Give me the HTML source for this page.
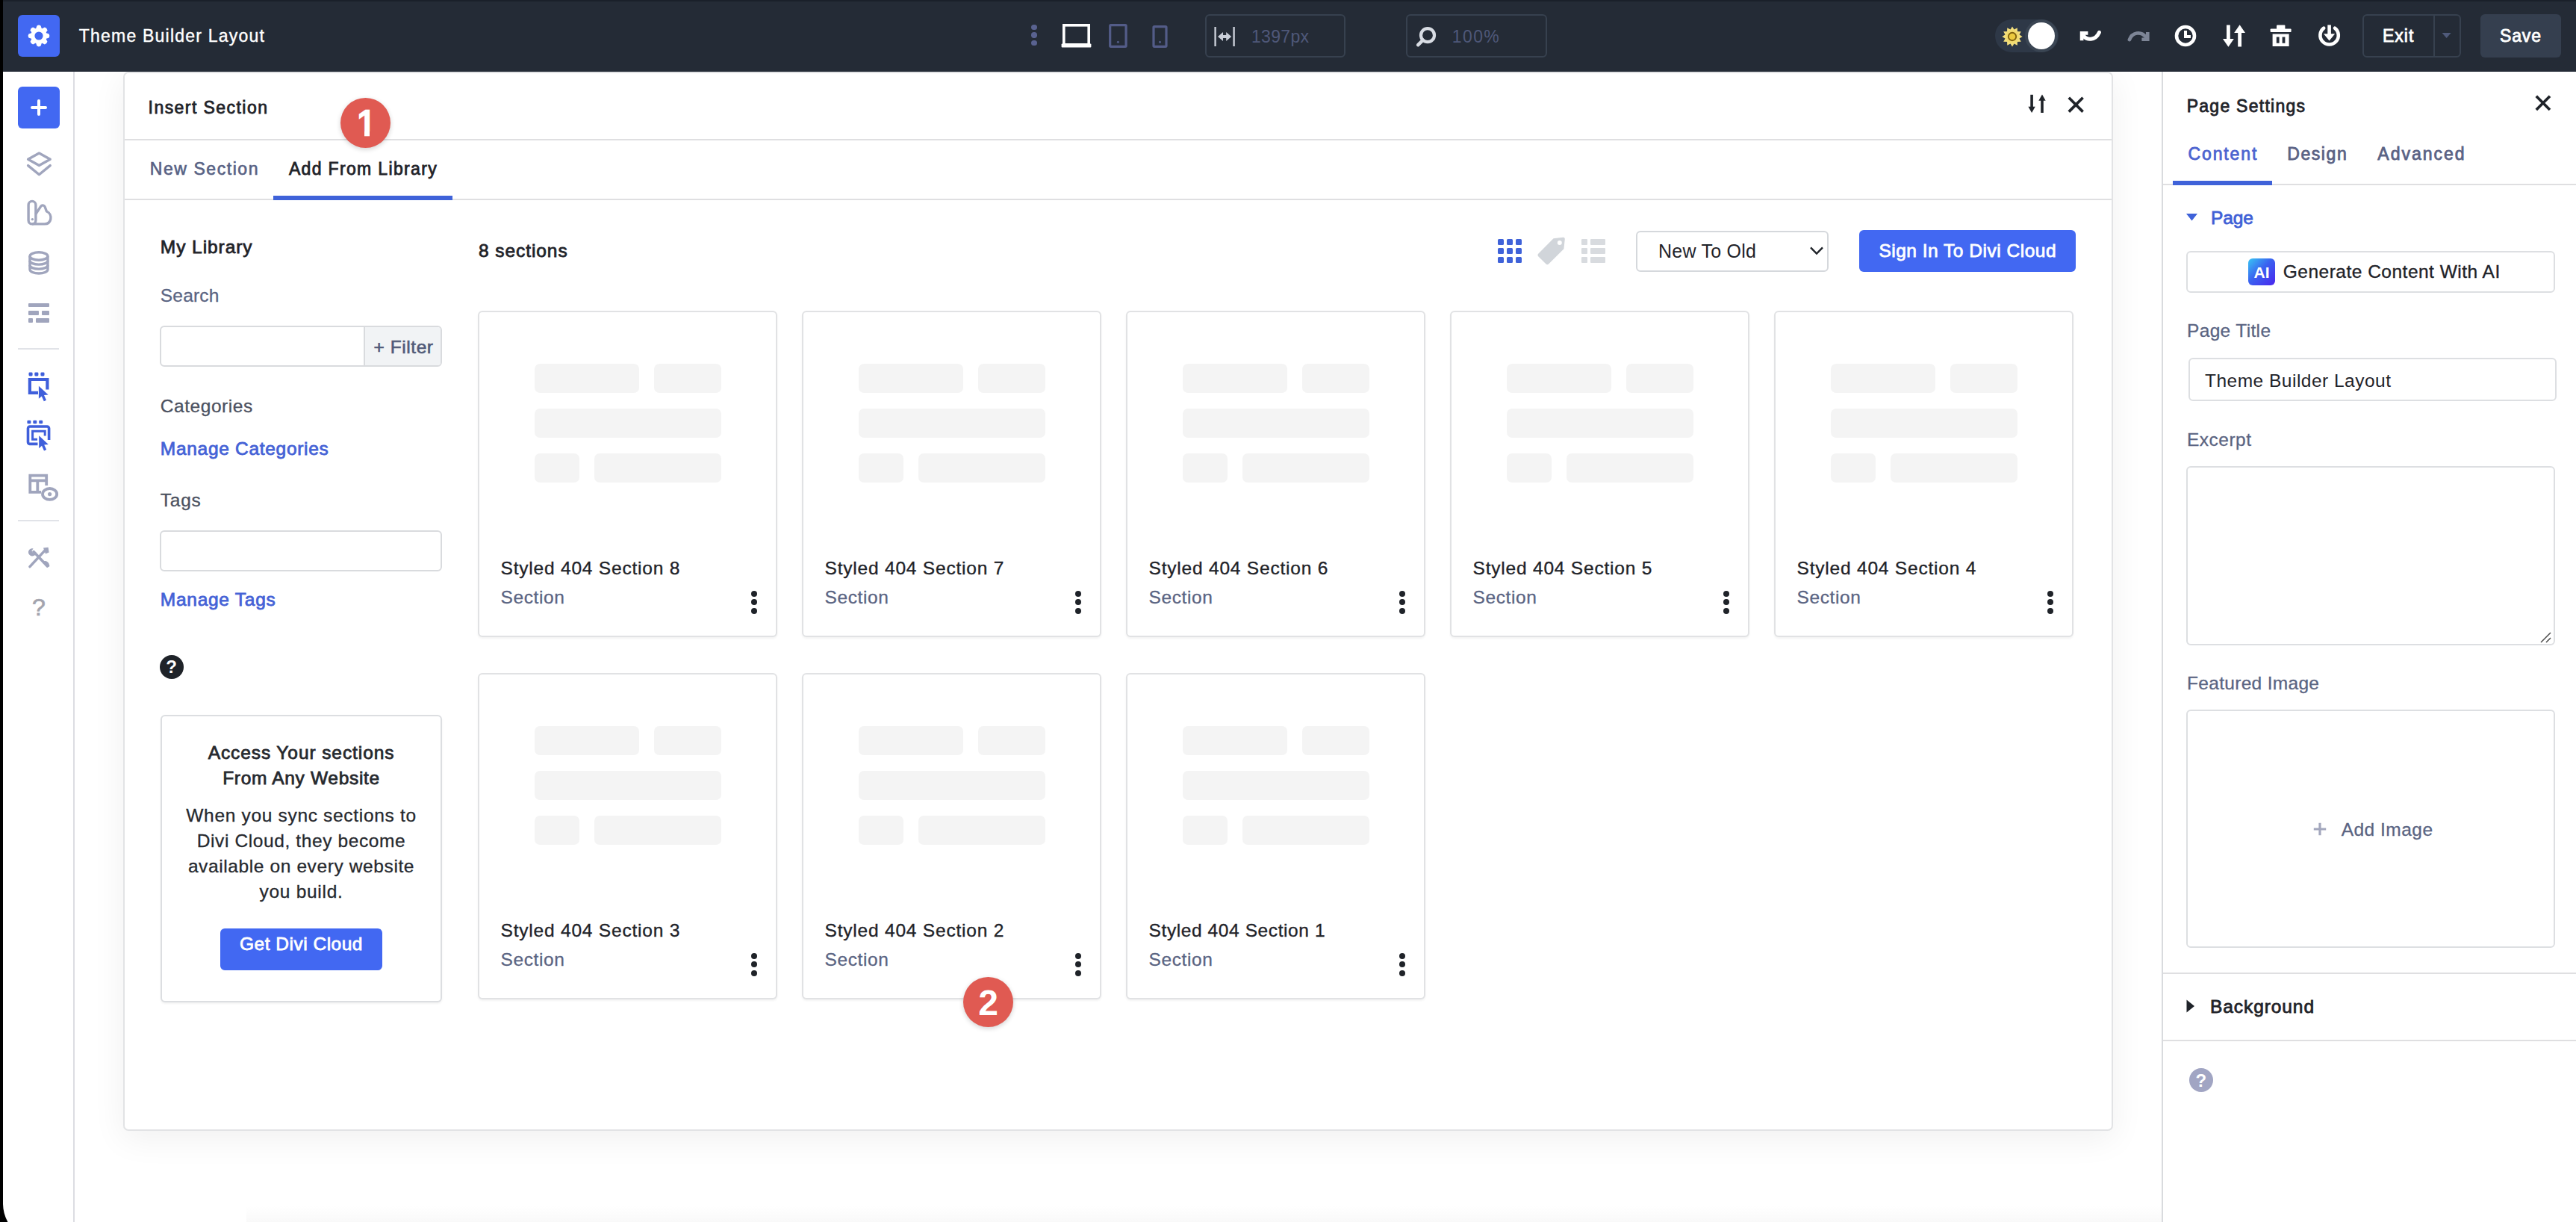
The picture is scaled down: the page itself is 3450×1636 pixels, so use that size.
<!DOCTYPE html>
<html lang="en"><head><meta charset="utf-8"><title>Theme Builder Layout</title>
<style>
html,body{margin:0;padding:0;background:#fff}
body{width:3450px;height:1636px;position:relative;overflow:hidden;font-family:"Liberation Sans",sans-serif}
.g{position:static;display:block;margin:0;padding:0}
.r{position:absolute;display:block}
.t{position:absolute;white-space:nowrap;line-height:1;display:block}
</style></head><body>
<div class="g" id="backdrop">
<div class="r" style="left:0px;top:0px;width:3450px;height:1636px;background:#fff"></div>
<div class="r" style="left:100px;top:96px;width:2795px;height:1540px;background:#fff"></div>
<div class="r" style="left:165px;top:96px;width:2665px;height:1418px;background:#fff;border:2px solid #e2e3e5;border-radius:7px;box-sizing:border-box;box-shadow:0 10px 44px 2px rgba(0,0,0,0.06)"></div>
<div class="r" style="left:330px;top:1614px;width:2565px;height:22px;background:linear-gradient(#fff,#f9f9f9)"></div>
<div class="r" style="left:4px;top:96px;width:94px;height:1540px;background:#fff"></div>
<div class="r" style="left:98px;top:96px;width:2px;height:1540px;background:#dcdde2"></div>
<div class="r" style="left:2895px;top:96px;width:555px;height:1540px;background:#fff;border-left:2px solid #d9dbde;box-sizing:border-box"></div>
<div class="r" style="left:0px;top:0px;width:3450px;height:96px;background:#242b36"></div>
<div class="r" style="left:0px;top:0px;width:3450px;height:2px;background:#1a202a"></div>
<div class="r" style="left:0px;top:0px;width:4px;height:1636px;background:#000"></div>
<svg class="r" style="left:0px;top:1606px;" width="34" height="30" viewBox="0 0 34 30"><path d="M0 0H4V6A51 51 0 0 0 10.4 30H0Z" fill="#000"/></svg>
</div>
<header class="g" id="topbar">
<div class="r" style="left:24px;top:20px;width:56px;height:56px;background:#4268f2;border-radius:6px"></div>
<svg class="r" style="left:36px;top:32px;" width="32" height="32" viewBox="0 0 32 32"><g transform="translate(16,16)"><path d="M-4.3 -8.6L-2.5 -13.6Q0 -15.2 2.5 -13.6L4.3 -8.6Z" transform="rotate(0)" fill="#fff"/><path d="M-4.3 -8.6L-2.5 -13.6Q0 -15.2 2.5 -13.6L4.3 -8.6Z" transform="rotate(45)" fill="#fff"/><path d="M-4.3 -8.6L-2.5 -13.6Q0 -15.2 2.5 -13.6L4.3 -8.6Z" transform="rotate(90)" fill="#fff"/><path d="M-4.3 -8.6L-2.5 -13.6Q0 -15.2 2.5 -13.6L4.3 -8.6Z" transform="rotate(135)" fill="#fff"/><path d="M-4.3 -8.6L-2.5 -13.6Q0 -15.2 2.5 -13.6L4.3 -8.6Z" transform="rotate(180)" fill="#fff"/><path d="M-4.3 -8.6L-2.5 -13.6Q0 -15.2 2.5 -13.6L4.3 -8.6Z" transform="rotate(225)" fill="#fff"/><path d="M-4.3 -8.6L-2.5 -13.6Q0 -15.2 2.5 -13.6L4.3 -8.6Z" transform="rotate(270)" fill="#fff"/><path d="M-4.3 -8.6L-2.5 -13.6Q0 -15.2 2.5 -13.6L4.3 -8.6Z" transform="rotate(315)" fill="#fff"/><circle r="8" fill="none" stroke="#fff" stroke-width="4.8"/></g></svg>
<span class="t" style="left:105.8px;top:35px;line-height:26px;font-size:23px;color:#fff;letter-spacing:1.21px;-webkit-text-stroke:0.4px #fff;">Theme Builder Layout</span>
<div class="r" style="left:1381.3px;top:32.8px;width:7.4px;height:7.4px;background:#596290;border-radius:50%"></div>
<div class="r" style="left:1381.3px;top:43.3px;width:7.4px;height:7.4px;background:#596290;border-radius:50%"></div>
<div class="r" style="left:1381.3px;top:53.8px;width:7.4px;height:7.4px;background:#596290;border-radius:50%"></div>
<svg class="r" style="left:1420px;top:30px;" width="44" height="36" viewBox="0 0 44 36"><rect x="4.8" y="3.8" width="33.4" height="26" fill="none" stroke="#fff" stroke-width="3.6"/><rect x="1.6" y="28.6" width="39.8" height="4.8" rx="1" fill="#fff"/></svg>
<svg class="r" style="left:1483px;top:30px;" width="30" height="36" viewBox="0 0 30 36"><rect x="3.7" y="3.7" width="21.4" height="28.6" rx="1" fill="none" stroke="#535c88" stroke-width="3.2"/><circle cx="14.4" cy="26.3" r="1.5" fill="#535c88"/></svg>
<svg class="r" style="left:1541px;top:30px;" width="26" height="36" viewBox="0 0 26 36"><rect x="4" y="5.6" width="17" height="26.7" rx="1" fill="none" stroke="#535c88" stroke-width="3.2"/><circle cx="12.5" cy="26.3" r="1.5" fill="#535c88"/></svg>
<div class="r" style="left:1614px;top:19px;width:188px;height:58px;border:2px solid #37414f;border-radius:6px;box-sizing:border-box"></div>
<svg class="r" style="left:1625px;top:34px;" width="32" height="30" viewBox="0 0 32 30"><path d="M2.6 2v26M27.6 2v26" stroke="#c9ced8" stroke-width="2.4" fill="none"/><path d="M6 15l7-6v4h4.2v-4l7 6-7 6v-4H13v4z" fill="#c9ced8"/></svg>
<span class="t" style="left:1676.0px;top:36px;line-height:26px;font-size:23px;color:#4f5879;letter-spacing:0.31px;">1397px</span>
<div class="r" style="left:1883px;top:19px;width:189px;height:58px;border:2px solid #37414f;border-radius:6px;box-sizing:border-box"></div>
<svg class="r" style="left:1895px;top:34px;" width="30" height="30" viewBox="0 0 30 30"><circle cx="17" cy="13.2" r="9" fill="none" stroke="#d8dce3" stroke-width="4.2"/><path d="M10.5 19.8L4.2 26.2" stroke="#d8dce3" stroke-width="4.6" stroke-linecap="round"/></svg>
<span class="t" style="left:1944.8px;top:36px;line-height:26px;font-size:23px;color:#4f5879;letter-spacing:1.39px;">100%</span>
<div class="r" style="left:2672px;top:26px;width:85px;height:44px;background:#2e3847;border-radius:22px"></div>
<svg class="r" style="left:2681px;top:34.6px;" width="28" height="28" viewBox="0 0 28 28"><g transform="translate(14,14)"><path d="M-3.4 -8 L0 -13.6 L3.4 -8Z" transform="rotate(0)" fill="#f3de7c"/><path d="M-3.4 -8 L0 -13.6 L3.4 -8Z" transform="rotate(30)" fill="#f3de7c"/><path d="M-3.4 -8 L0 -13.6 L3.4 -8Z" transform="rotate(60)" fill="#f3de7c"/><path d="M-3.4 -8 L0 -13.6 L3.4 -8Z" transform="rotate(90)" fill="#f3de7c"/><path d="M-3.4 -8 L0 -13.6 L3.4 -8Z" transform="rotate(120)" fill="#f3de7c"/><path d="M-3.4 -8 L0 -13.6 L3.4 -8Z" transform="rotate(150)" fill="#f3de7c"/><path d="M-3.4 -8 L0 -13.6 L3.4 -8Z" transform="rotate(180)" fill="#f3de7c"/><path d="M-3.4 -8 L0 -13.6 L3.4 -8Z" transform="rotate(210)" fill="#f3de7c"/><path d="M-3.4 -8 L0 -13.6 L3.4 -8Z" transform="rotate(240)" fill="#f3de7c"/><path d="M-3.4 -8 L0 -13.6 L3.4 -8Z" transform="rotate(270)" fill="#f3de7c"/><path d="M-3.4 -8 L0 -13.6 L3.4 -8Z" transform="rotate(300)" fill="#f3de7c"/><path d="M-3.4 -8 L0 -13.6 L3.4 -8Z" transform="rotate(330)" fill="#f3de7c"/><circle r="8.8" fill="#f1da6e"/><circle r="5.2" fill="#ecca3e" stroke="#80610f" stroke-width="1.9"/></g></svg>
<div class="r" style="left:2712px;top:26px;width:44px;height:44px;background:#3a4553;border-radius:50%"></div>
<div class="r" style="left:2716px;top:30px;width:36.4px;height:36.4px;background:#fff;border-radius:50%"></div>
<svg class="r" style="left:2782px;top:34px;" width="36" height="28" viewBox="0 0 36 28"><path d="M6.1 20.2V10.4H14.4" fill="none" stroke="#fff" stroke-width="4.7"/><path d="M8 13C12 20.5 24.5 20.5 29.4 9.4" fill="none" stroke="#fff" stroke-width="5" stroke-linecap="round"/></svg>
<svg class="r" style="left:2846px;top:34px;" width="36" height="28" viewBox="0 0 36 28"><path d="M30.3 9V18.7H22.4" fill="none" stroke="#7d8596" stroke-width="4.6"/><path d="M6 19C9.5 9.5 21 7 28 15.5" fill="none" stroke="#7d8596" stroke-width="4.8" stroke-linecap="round"/></svg>
<svg class="r" style="left:2911px;top:32px;" width="32" height="32" viewBox="0 0 32 32"><circle cx="16" cy="16" r="12" fill="none" stroke="#fff" stroke-width="4.6"/><path d="M16 9v8h7" fill="none" stroke="#fff" stroke-width="4"/></svg>
<svg class="r" style="left:2977px;top:32px;" width="30" height="32" viewBox="0 0 30 32"><g fill="#fff"><rect x="5" y="1.5" width="4.8" height="22"/><path d="M0 20H14.8L7.4 30.8Z"/><rect x="20.2" y="8.5" width="4.8" height="22"/><path d="M15.2 12H30L22.6 1.2Z"/></g></svg>
<svg class="r" style="left:3039px;top:32px;" width="32" height="32" viewBox="0 0 32 32"><g fill="#fff"><rect x="1.6" y="6.4" width="28" height="4.6" rx="1"/><rect x="10" y="1.6" width="11.4" height="6" rx="1"/><path d="M4.6 13.4H26.6V30H4.6Z M9.8 17.6V25.8H13.6V17.6Z M17.6 17.6V25.8H21.4V17.6Z" fill-rule="evenodd"/></g></svg>
<svg class="r" style="left:3103px;top:32px;" width="34" height="32" viewBox="0 0 34 32"><path d="M9.2 5.6A12.2 12.2 0 1 0 24 5.6" fill="none" stroke="#fff" stroke-width="4.6" stroke-linecap="round"/><rect x="14.3" y="1.4" width="4.6" height="14" fill="#fff"/><path d="M9 13.2H24.2L16.6 22.6Z" fill="#fff"/></svg>
<div class="r" style="left:3164px;top:19px;width:132px;height:58px;border:2px solid #37414f;border-radius:6px;box-sizing:border-box"></div>
<div class="r" style="left:3258.5px;top:21px;width:2px;height:54px;background:#37414f"></div>
<span class="t" style="left:3191.0px;top:35px;line-height:26px;font-size:23px;color:#fff;letter-spacing:0.99px;-webkit-text-stroke:0.8px #fff;">Exit</span>
<svg class="r" style="left:3270px;top:43px;" width="14" height="9" viewBox="0 0 14 9"><path d="M0.6 1H12.6L6.6 8Z" fill="#4f5a7a"/></svg>
<div class="r" style="left:3321.5px;top:19px;width:108px;height:58px;background:#353f4f;border-radius:6px"></div>
<span class="t" style="left:3348.0px;top:35px;line-height:26px;font-size:23px;color:#fff;letter-spacing:0.86px;-webkit-text-stroke:0.8px #fff;">Save</span>
</header>
<nav class="g" id="sidebar">
<div class="r" style="left:24px;top:116px;width:56px;height:56px;background:#4268f2;border-radius:6px"></div>
<div class="r" style="left:41px;top:141.7px;width:22px;height:4.6px;background:#fff;border-radius:2px"></div>
<div class="r" style="left:49.7px;top:133px;width:4.6px;height:22px;background:#fff;border-radius:2px"></div>
<svg class="r" style="left:34px;top:201px;" width="36" height="38" viewBox="0 0 36 38"><g fill="none" stroke="#a0a5bd" stroke-width="3.4" stroke-linejoin="round" stroke-linecap="round"><path d="M18.4 4.1L33.2 12.3L18.4 20.5L3.6 12.3Z"/><path d="M3.6 20.6L18.4 32.8L33.2 20.6"/></g></svg>
<svg class="r" style="left:34px;top:266px;" width="38" height="38" viewBox="0 0 38 38"><g fill="none" stroke="#a0a5bd" stroke-width="3.4" stroke-linejoin="round"><rect x="4.1" y="3.4" width="9.8" height="30.5" rx="4.9"/><path d="M13.9 20.5L20.6 10.4C22 8.2 25.2 8.4 26.2 11L28.4 17C32.6 18.6 34.6 23 33.8 27.4C33 31.4 30 33.9 25.6 33.9H9"/></g><circle cx="9.4" cy="27.6" r="1.7" fill="#a0a5bd"/></svg>
<svg class="r" style="left:36px;top:334px;" width="32" height="36" viewBox="0 0 32 36"><g fill="none" stroke="#a0a5bd" stroke-width="3.4"><ellipse cx="16" cy="9" rx="12" ry="5.2"/><path d="M4 9V26.8C4 29.7 9.3 32 16 32S28 29.7 28 26.8V9"/><path d="M4 14.9C4 17.8 9.3 20.1 16 20.1S28 17.8 28 14.9"/><path d="M4 20.9C4 23.8 9.3 26.1 16 26.1S28 23.8 28 20.9"/></g></svg>
<div class="r" style="left:38px;top:405.8px;width:27.8px;height:5.6px;background:#a0a5bd;border-radius:1px"></div>
<div class="r" style="left:38px;top:416px;width:13.5px;height:5.6px;background:#a0a5bd;border-radius:1px"></div>
<div class="r" style="left:56px;top:416px;width:9.8px;height:5.6px;background:#a0a5bd;border-radius:1px"></div>
<div class="r" style="left:38px;top:426px;width:5.7px;height:5.6px;background:#a0a5bd;border-radius:1px"></div>
<div class="r" style="left:47.9px;top:426px;width:17.9px;height:5.6px;background:#a0a5bd;border-radius:1px"></div>
<div class="r" style="left:24px;top:466px;width:55px;height:2px;background:#e1e3e8"></div>
<svg class="r" style="left:36px;top:497px;" width="32" height="42" viewBox="0 0 32 42"><rect x="2.5" y="1.4" width="5.1" height="5" rx="1.4" fill="#3f5fdb"/><rect x="10.3" y="1.4" width="5.1" height="5" rx="1.4" fill="#3f5fdb"/><rect x="18.4" y="1.4" width="5.1" height="5" rx="1.4" fill="#3f5fdb"/><path d="M15 28.8H3.9V11H27.4V24.6" fill="none" stroke="#3f5fdb" stroke-width="4.2"/><path d="M15.9 19.8L15.9 36.8L19.8 33.4L22.8 40.2L26 38.7L23 32L28.6 31.6Z" fill="#3f5fdb" stroke="#fff" stroke-width="1.4" paint-order="stroke"/></svg>
<svg class="r" style="left:34px;top:561px;" width="36" height="44" viewBox="0 0 36 44"><rect x="2.4" y="1.7" width="5" height="4.6" rx="1.3" fill="#3f5fdb"/><rect x="10.3" y="1.7" width="5" height="4.6" rx="1.3" fill="#3f5fdb"/><rect x="18.2" y="1.7" width="5" height="4.6" rx="1.3" fill="#3f5fdb"/><path d="M16.5 33.4H6A2.5 2.5 0 0 1 3.5 30.9V12.5A2.5 2.5 0 0 1 6 10H29.1A2.5 2.5 0 0 1 31.6 12.5V28" fill="none" stroke="#3f5fdb" stroke-width="3.6"/><path d="M16 27.2H9.6V16.3H26.2V22.5" fill="none" stroke="#3f5fdb" stroke-width="3"/><path d="M18.2 22.2L18.2 39.2L22 35.8L25 42.6L28.2 41.1L25.2 34.4L30.8 34Z" fill="#3f5fdb" stroke="#fff" stroke-width="1.4" paint-order="stroke"/></svg>
<svg class="r" style="left:36px;top:632px;" width="44" height="42" viewBox="0 0 44 42"><g fill="none" stroke="#a0a5bd" stroke-width="3.8"><path d="M19 26.8H4.3V4.7H26.2V18"/><path d="M4.3 11.3H26.2M14.3 11.3V26.8"/><ellipse cx="30.6" cy="29.4" rx="9.6" ry="7.4"/></g><circle cx="30.6" cy="29.6" r="2.6" fill="#a0a5bd"/></svg>
<div class="r" style="left:24px;top:696px;width:55px;height:2px;background:#e1e3e8"></div>
<svg class="r" style="left:36px;top:731px;" width="32" height="32" viewBox="0 0 32 32"><g stroke="#a0a5bd" stroke-width="3.6" stroke-linecap="round" fill="none"><path d="M4 27.6L24.4 5.6"/><path d="M9 7.6L27.4 27"/></g><path d="M22 2.6L28.6 1.8L29.6 8.6L25 10.4Z" fill="#a0a5bd"/><path d="M2 8.6C2 5 5 2.6 8.6 3.4L6.4 6.6L8.6 9.4L12.4 8.6C12.4 12 9.4 14 6.4 13.4C3.8 12.8 2 11 2 8.6Z" fill="#a0a5bd"/><path d="M22.6 22C25.6 21 28.6 23 28.8 26.4" fill="none" stroke="#a0a5bd" stroke-width="3.2" stroke-linecap="round"/></svg>
<span class="t" style="left:52.0px;top:795px;line-height:36px;font-size:32px;color:#a3a4ae;-webkit-text-stroke:0.7px #a3a4ae;transform:translateX(-50%);">?</span>
</nav>
<main class="g" id="insert-section-modal">
<span class="t" style="left:198.6px;top:131px;line-height:26px;font-size:23px;color:#1f2329;letter-spacing:1.44px;-webkit-text-stroke:0.8px #1f2329;">Insert Section</span>
<svg class="r" style="left:2715px;top:125px;" width="26" height="28" viewBox="0 0 26 28"><g fill="#1f2329"><rect x="4.3" y="1.8" width="3.6" height="18"/><path d="M1.4 17.8H10.8L6.1 26.1Z"/><rect x="18.2" y="8" width="3.6" height="18"/><path d="M15.3 9.8H24.7L20 1.6Z"/></g></svg>
<svg class="r" style="left:2768.9px;top:128.9px;" width="22.4" height="22.4" viewBox="0 0 22.4 22.4"><path d="M1.8 1.8L20.599999999999998 20.599999999999998M20.599999999999998 1.8L1.8 20.599999999999998" stroke="#1f2329" stroke-width="3.7" fill="none"/></svg>
<div class="r" style="left:167px;top:186px;width:2661px;height:2px;background:#dfdfe1"></div>
<span class="t" style="left:200.8px;top:213px;line-height:26px;font-size:23px;color:#586284;letter-spacing:1.56px;-webkit-text-stroke:0.65px #586284;">New Section</span>
<span class="t" style="left:386.9px;top:213px;line-height:26px;font-size:23px;color:#1f2329;letter-spacing:1.34px;-webkit-text-stroke:0.8px #1f2329;">Add From Library</span>
<div class="r" style="left:167px;top:266px;width:2661px;height:2px;background:#dfdfe1"></div>
<div class="r" style="left:366px;top:262px;width:240px;height:6px;background:#3f62d9"></div>
<span class="t" style="left:214.8px;top:317px;line-height:27px;font-size:24.5px;color:#1f2329;letter-spacing:0.94px;-webkit-text-stroke:0.8px #1f2329;">My Library</span>
<span class="t" style="left:214.8px;top:382px;line-height:27px;font-size:24.5px;color:#5a6482;letter-spacing:0.19px;-webkit-text-stroke:0.3px #5a6482;">Search</span>
<div class="r" style="left:214px;top:436px;width:378px;height:55px;border:2px solid #d9dbde;border-radius:6px;box-sizing:border-box;background:#fff"></div>
<div class="r" style="left:487px;top:438px;width:103px;height:51px;background:#f1f3f5;border-left:2px solid #d9dbde;border-radius:0 4px 4px 0;box-sizing:border-box"></div>
<span class="t" style="left:500.5px;top:451px;line-height:27px;font-size:24.5px;color:#505a78;letter-spacing:0.56px;-webkit-text-stroke:0.6px #505a78;">+ Filter</span>
<span class="t" style="left:214.8px;top:530px;line-height:27px;font-size:24.5px;color:#4b5160;letter-spacing:0.55px;-webkit-text-stroke:0.3px #4b5160;">Categories</span>
<span class="t" style="left:214.8px;top:587px;line-height:27px;font-size:24.5px;color:#4562d6;letter-spacing:0.70px;-webkit-text-stroke:0.8px #4562d6;">Manage Categories</span>
<span class="t" style="left:214.8px;top:656px;line-height:27px;font-size:24.5px;color:#4b5160;letter-spacing:0.75px;-webkit-text-stroke:0.3px #4b5160;">Tags</span>
<div class="r" style="left:214px;top:710px;width:378px;height:55px;border:2px solid #d9dbde;border-radius:6px;box-sizing:border-box;background:#fff"></div>
<span class="t" style="left:214.8px;top:789px;line-height:27px;font-size:24.5px;color:#4562d6;letter-spacing:0.73px;-webkit-text-stroke:0.8px #4562d6;">Manage Tags</span>
<div class="r" style="left:213.7px;top:876.5px;width:32px;height:32px;background:#1f2329;border-radius:50%"></div>
<span class="t" style="left:229.7px;top:879px;line-height:27px;font-size:24px;color:#fff;font-weight:700;transform:translateX(-50%);">?</span>
<div class="r" style="left:215px;top:957px;width:377px;height:385px;border:2px solid #dcdee1;border-radius:6px;box-sizing:border-box;background:#fff;box-shadow:0 2px 3px rgba(0,0,0,0.05)"></div>
<span class="t" style="left:403.5px;top:994px;line-height:27px;font-size:24.5px;color:#26292e;letter-spacing:0.91px;-webkit-text-stroke:0.8px #26292e;transform:translateX(-50%);">Access Your sections</span>
<span class="t" style="left:403.5px;top:1028px;line-height:27px;font-size:24.5px;color:#26292e;letter-spacing:0.69px;-webkit-text-stroke:0.8px #26292e;transform:translateX(-50%);">From Any Website</span>
<span class="t" style="left:403.5px;top:1078px;line-height:27px;font-size:24.5px;color:#26292e;letter-spacing:0.68px;-webkit-text-stroke:0.3px #26292e;transform:translateX(-50%);">When you sync sections to</span>
<span class="t" style="left:403.5px;top:1112px;line-height:27px;font-size:24.5px;color:#26292e;letter-spacing:0.61px;-webkit-text-stroke:0.3px #26292e;transform:translateX(-50%);">Divi Cloud, they become</span>
<span class="t" style="left:403.5px;top:1146px;line-height:27px;font-size:24.5px;color:#26292e;letter-spacing:0.61px;-webkit-text-stroke:0.3px #26292e;transform:translateX(-50%);">available on every website</span>
<span class="t" style="left:403.5px;top:1180px;line-height:27px;font-size:24.5px;color:#26292e;letter-spacing:0.71px;-webkit-text-stroke:0.3px #26292e;transform:translateX(-50%);">you build.</span>
<div class="r" style="left:295px;top:1243px;width:217px;height:56px;background:#4268f2;border-radius:6px"></div>
<span class="t" style="left:403.5px;top:1250px;line-height:27px;font-size:24.5px;color:#fff;letter-spacing:0.50px;-webkit-text-stroke:0.8px #fff;transform:translateX(-50%);">Get Divi Cloud</span>
<span class="t" style="left:641.0px;top:322px;line-height:27px;font-size:24.5px;color:#1f2329;letter-spacing:0.93px;-webkit-text-stroke:0.8px #1f2329;">8 sections</span>
<div class="r" style="left:2005.5px;top:319.8px;width:8.2px;height:8.2px;background:#3f62d9;border-radius:1.5px"></div>
<div class="r" style="left:2005.5px;top:332.0px;width:8.2px;height:8.2px;background:#3f62d9;border-radius:1.5px"></div>
<div class="r" style="left:2005.5px;top:344.2px;width:8.2px;height:8.2px;background:#3f62d9;border-radius:1.5px"></div>
<div class="r" style="left:2017.7px;top:319.8px;width:8.2px;height:8.2px;background:#3f62d9;border-radius:1.5px"></div>
<div class="r" style="left:2017.7px;top:332.0px;width:8.2px;height:8.2px;background:#3f62d9;border-radius:1.5px"></div>
<div class="r" style="left:2017.7px;top:344.2px;width:8.2px;height:8.2px;background:#3f62d9;border-radius:1.5px"></div>
<div class="r" style="left:2029.9px;top:319.8px;width:8.2px;height:8.2px;background:#3f62d9;border-radius:1.5px"></div>
<div class="r" style="left:2029.9px;top:332.0px;width:8.2px;height:8.2px;background:#3f62d9;border-radius:1.5px"></div>
<div class="r" style="left:2029.9px;top:344.2px;width:8.2px;height:8.2px;background:#3f62d9;border-radius:1.5px"></div>
<svg class="r" style="left:2058px;top:316px;" width="40" height="40" viewBox="0 0 40 40"><path d="M22.5 3.2L35.4 1.8C36.8 1.6 38 2.8 37.8 4.2L36.4 17.2L16 37.6C15 38.6 13.6 38.6 12.6 37.6L2.2 27.2C1.2 26.2 1.2 24.8 2.2 23.8Z M30.8 6A3 3 0 1 0 30.8 12A3 3 0 1 0 30.8 6Z" fill="#d1d5da" fill-rule="evenodd"/></svg>
<div class="r" style="left:2117.9px;top:319.8px;width:8px;height:8.2px;background:#d8dbdf;border-radius:1px"></div>
<div class="r" style="left:2129.7px;top:319.8px;width:20.7px;height:8.2px;background:#d8dbdf;border-radius:1px"></div>
<div class="r" style="left:2117.9px;top:332.0px;width:8px;height:8.2px;background:#d8dbdf;border-radius:1px"></div>
<div class="r" style="left:2129.7px;top:332.0px;width:20.7px;height:8.2px;background:#d8dbdf;border-radius:1px"></div>
<div class="r" style="left:2117.9px;top:344.2px;width:8px;height:8.2px;background:#d8dbdf;border-radius:1px"></div>
<div class="r" style="left:2129.7px;top:344.2px;width:20.7px;height:8.2px;background:#d8dbdf;border-radius:1px"></div>
<div class="r" style="left:2191px;top:308.5px;width:258px;height:55px;border:2px solid #d5d8dc;border-radius:6px;box-sizing:border-box;background:#fff"></div>
<span class="t" style="left:2221.0px;top:322px;line-height:28px;font-size:25px;color:#1f2329;letter-spacing:0.23px;">New To Old</span>
<svg class="r" style="left:2423px;top:329px;" width="20" height="14" viewBox="0 0 20 14"><path d="M2 2.4L10 10.6L18 2.4" fill="none" stroke="#1f2329" stroke-width="2.4"/></svg>
<div class="r" style="left:2490px;top:308px;width:290px;height:56px;background:#4268f2;border-radius:6px"></div>
<span class="t" style="left:2516.4px;top:322px;line-height:27px;font-size:24.5px;color:#fff;letter-spacing:0.51px;-webkit-text-stroke:0.8px #fff;">Sign In To Divi Cloud</span>
<div class="r" style="left:640px;top:416px;width:401px;height:437px;border:2px solid #e1e2e4;border-radius:6px;box-sizing:border-box;background:#fff;box-shadow:0 2px 3px rgba(0,0,0,0.05)"></div>
<div class="r" style="left:716px;top:487px;width:140px;height:39px;background:#f4f4f4;border-radius:7px"></div>
<div class="r" style="left:876px;top:487px;width:89.5px;height:39px;background:#f4f4f4;border-radius:7px"></div>
<div class="r" style="left:716px;top:547px;width:249.5px;height:38.5px;background:#f4f4f4;border-radius:7px"></div>
<div class="r" style="left:716px;top:607px;width:60px;height:39px;background:#f4f4f4;border-radius:7px"></div>
<div class="r" style="left:796px;top:607px;width:169.5px;height:39px;background:#f4f4f4;border-radius:7px"></div>
<span class="t" style="left:670.6px;top:747px;line-height:27px;font-size:24.5px;color:#1f2329;letter-spacing:0.79px;-webkit-text-stroke:0.35px #1f2329;">Styled 404 Section 8</span>
<span class="t" style="left:670.6px;top:786px;line-height:27px;font-size:24.5px;color:#5a6482;letter-spacing:0.60px;-webkit-text-stroke:0.3px #5a6482;">Section</span>
<div class="r" style="left:1006.2px;top:790.5px;width:8px;height:8px;background:#1f2329;border-radius:50%"></div>
<div class="r" style="left:1006.2px;top:802.2px;width:8px;height:8px;background:#1f2329;border-radius:50%"></div>
<div class="r" style="left:1006.2px;top:814px;width:8px;height:8px;background:#1f2329;border-radius:50%"></div>
<div class="r" style="left:1074px;top:416px;width:401px;height:437px;border:2px solid #e1e2e4;border-radius:6px;box-sizing:border-box;background:#fff;box-shadow:0 2px 3px rgba(0,0,0,0.05)"></div>
<div class="r" style="left:1150px;top:487px;width:140px;height:39px;background:#f4f4f4;border-radius:7px"></div>
<div class="r" style="left:1310px;top:487px;width:89.5px;height:39px;background:#f4f4f4;border-radius:7px"></div>
<div class="r" style="left:1150px;top:547px;width:249.5px;height:38.5px;background:#f4f4f4;border-radius:7px"></div>
<div class="r" style="left:1150px;top:607px;width:60px;height:39px;background:#f4f4f4;border-radius:7px"></div>
<div class="r" style="left:1230px;top:607px;width:169.5px;height:39px;background:#f4f4f4;border-radius:7px"></div>
<span class="t" style="left:1104.6px;top:747px;line-height:27px;font-size:24.5px;color:#1f2329;letter-spacing:0.79px;-webkit-text-stroke:0.35px #1f2329;">Styled 404 Section 7</span>
<span class="t" style="left:1104.6px;top:786px;line-height:27px;font-size:24.5px;color:#5a6482;letter-spacing:0.60px;-webkit-text-stroke:0.3px #5a6482;">Section</span>
<div class="r" style="left:1440.2px;top:790.5px;width:8px;height:8px;background:#1f2329;border-radius:50%"></div>
<div class="r" style="left:1440.2px;top:802.2px;width:8px;height:8px;background:#1f2329;border-radius:50%"></div>
<div class="r" style="left:1440.2px;top:814px;width:8px;height:8px;background:#1f2329;border-radius:50%"></div>
<div class="r" style="left:1508px;top:416px;width:401px;height:437px;border:2px solid #e1e2e4;border-radius:6px;box-sizing:border-box;background:#fff;box-shadow:0 2px 3px rgba(0,0,0,0.05)"></div>
<div class="r" style="left:1584px;top:487px;width:140px;height:39px;background:#f4f4f4;border-radius:7px"></div>
<div class="r" style="left:1744px;top:487px;width:89.5px;height:39px;background:#f4f4f4;border-radius:7px"></div>
<div class="r" style="left:1584px;top:547px;width:249.5px;height:38.5px;background:#f4f4f4;border-radius:7px"></div>
<div class="r" style="left:1584px;top:607px;width:60px;height:39px;background:#f4f4f4;border-radius:7px"></div>
<div class="r" style="left:1664px;top:607px;width:169.5px;height:39px;background:#f4f4f4;border-radius:7px"></div>
<span class="t" style="left:1538.6px;top:747px;line-height:27px;font-size:24.5px;color:#1f2329;letter-spacing:0.79px;-webkit-text-stroke:0.35px #1f2329;">Styled 404 Section 6</span>
<span class="t" style="left:1538.6px;top:786px;line-height:27px;font-size:24.5px;color:#5a6482;letter-spacing:0.60px;-webkit-text-stroke:0.3px #5a6482;">Section</span>
<div class="r" style="left:1874.2px;top:790.5px;width:8px;height:8px;background:#1f2329;border-radius:50%"></div>
<div class="r" style="left:1874.2px;top:802.2px;width:8px;height:8px;background:#1f2329;border-radius:50%"></div>
<div class="r" style="left:1874.2px;top:814px;width:8px;height:8px;background:#1f2329;border-radius:50%"></div>
<div class="r" style="left:1942px;top:416px;width:401px;height:437px;border:2px solid #e1e2e4;border-radius:6px;box-sizing:border-box;background:#fff;box-shadow:0 2px 3px rgba(0,0,0,0.05)"></div>
<div class="r" style="left:2018px;top:487px;width:140px;height:39px;background:#f4f4f4;border-radius:7px"></div>
<div class="r" style="left:2178px;top:487px;width:89.5px;height:39px;background:#f4f4f4;border-radius:7px"></div>
<div class="r" style="left:2018px;top:547px;width:249.5px;height:38.5px;background:#f4f4f4;border-radius:7px"></div>
<div class="r" style="left:2018px;top:607px;width:60px;height:39px;background:#f4f4f4;border-radius:7px"></div>
<div class="r" style="left:2098px;top:607px;width:169.5px;height:39px;background:#f4f4f4;border-radius:7px"></div>
<span class="t" style="left:1972.6px;top:747px;line-height:27px;font-size:24.5px;color:#1f2329;letter-spacing:0.79px;-webkit-text-stroke:0.35px #1f2329;">Styled 404 Section 5</span>
<span class="t" style="left:1972.6px;top:786px;line-height:27px;font-size:24.5px;color:#5a6482;letter-spacing:0.60px;-webkit-text-stroke:0.3px #5a6482;">Section</span>
<div class="r" style="left:2308.2px;top:790.5px;width:8px;height:8px;background:#1f2329;border-radius:50%"></div>
<div class="r" style="left:2308.2px;top:802.2px;width:8px;height:8px;background:#1f2329;border-radius:50%"></div>
<div class="r" style="left:2308.2px;top:814px;width:8px;height:8px;background:#1f2329;border-radius:50%"></div>
<div class="r" style="left:2376px;top:416px;width:401px;height:437px;border:2px solid #e1e2e4;border-radius:6px;box-sizing:border-box;background:#fff;box-shadow:0 2px 3px rgba(0,0,0,0.05)"></div>
<div class="r" style="left:2452px;top:487px;width:140px;height:39px;background:#f4f4f4;border-radius:7px"></div>
<div class="r" style="left:2612px;top:487px;width:89.5px;height:39px;background:#f4f4f4;border-radius:7px"></div>
<div class="r" style="left:2452px;top:547px;width:249.5px;height:38.5px;background:#f4f4f4;border-radius:7px"></div>
<div class="r" style="left:2452px;top:607px;width:60px;height:39px;background:#f4f4f4;border-radius:7px"></div>
<div class="r" style="left:2532px;top:607px;width:169.5px;height:39px;background:#f4f4f4;border-radius:7px"></div>
<span class="t" style="left:2406.6px;top:747px;line-height:27px;font-size:24.5px;color:#1f2329;letter-spacing:0.79px;-webkit-text-stroke:0.35px #1f2329;">Styled 404 Section 4</span>
<span class="t" style="left:2406.6px;top:786px;line-height:27px;font-size:24.5px;color:#5a6482;letter-spacing:0.60px;-webkit-text-stroke:0.3px #5a6482;">Section</span>
<div class="r" style="left:2742.2px;top:790.5px;width:8px;height:8px;background:#1f2329;border-radius:50%"></div>
<div class="r" style="left:2742.2px;top:802.2px;width:8px;height:8px;background:#1f2329;border-radius:50%"></div>
<div class="r" style="left:2742.2px;top:814px;width:8px;height:8px;background:#1f2329;border-radius:50%"></div>
<div class="r" style="left:640px;top:901px;width:401px;height:437px;border:2px solid #e1e2e4;border-radius:6px;box-sizing:border-box;background:#fff;box-shadow:0 2px 3px rgba(0,0,0,0.05)"></div>
<div class="r" style="left:716px;top:972px;width:140px;height:39px;background:#f4f4f4;border-radius:7px"></div>
<div class="r" style="left:876px;top:972px;width:89.5px;height:39px;background:#f4f4f4;border-radius:7px"></div>
<div class="r" style="left:716px;top:1032px;width:249.5px;height:38.5px;background:#f4f4f4;border-radius:7px"></div>
<div class="r" style="left:716px;top:1092px;width:60px;height:39px;background:#f4f4f4;border-radius:7px"></div>
<div class="r" style="left:796px;top:1092px;width:169.5px;height:39px;background:#f4f4f4;border-radius:7px"></div>
<span class="t" style="left:670.6px;top:1232px;line-height:27px;font-size:24.5px;color:#1f2329;letter-spacing:0.79px;-webkit-text-stroke:0.35px #1f2329;">Styled 404 Section 3</span>
<span class="t" style="left:670.6px;top:1271px;line-height:27px;font-size:24.5px;color:#5a6482;letter-spacing:0.60px;-webkit-text-stroke:0.3px #5a6482;">Section</span>
<div class="r" style="left:1006.2px;top:1275.5px;width:8px;height:8px;background:#1f2329;border-radius:50%"></div>
<div class="r" style="left:1006.2px;top:1287.2px;width:8px;height:8px;background:#1f2329;border-radius:50%"></div>
<div class="r" style="left:1006.2px;top:1299px;width:8px;height:8px;background:#1f2329;border-radius:50%"></div>
<div class="r" style="left:1074px;top:901px;width:401px;height:437px;border:2px solid #e1e2e4;border-radius:6px;box-sizing:border-box;background:#fff;box-shadow:0 2px 3px rgba(0,0,0,0.05)"></div>
<div class="r" style="left:1150px;top:972px;width:140px;height:39px;background:#f4f4f4;border-radius:7px"></div>
<div class="r" style="left:1310px;top:972px;width:89.5px;height:39px;background:#f4f4f4;border-radius:7px"></div>
<div class="r" style="left:1150px;top:1032px;width:249.5px;height:38.5px;background:#f4f4f4;border-radius:7px"></div>
<div class="r" style="left:1150px;top:1092px;width:60px;height:39px;background:#f4f4f4;border-radius:7px"></div>
<div class="r" style="left:1230px;top:1092px;width:169.5px;height:39px;background:#f4f4f4;border-radius:7px"></div>
<span class="t" style="left:1104.6px;top:1232px;line-height:27px;font-size:24.5px;color:#1f2329;letter-spacing:0.79px;-webkit-text-stroke:0.35px #1f2329;">Styled 404 Section 2</span>
<span class="t" style="left:1104.6px;top:1271px;line-height:27px;font-size:24.5px;color:#5a6482;letter-spacing:0.60px;-webkit-text-stroke:0.3px #5a6482;">Section</span>
<div class="r" style="left:1440.2px;top:1275.5px;width:8px;height:8px;background:#1f2329;border-radius:50%"></div>
<div class="r" style="left:1440.2px;top:1287.2px;width:8px;height:8px;background:#1f2329;border-radius:50%"></div>
<div class="r" style="left:1440.2px;top:1299px;width:8px;height:8px;background:#1f2329;border-radius:50%"></div>
<div class="r" style="left:1508px;top:901px;width:401px;height:437px;border:2px solid #e1e2e4;border-radius:6px;box-sizing:border-box;background:#fff;box-shadow:0 2px 3px rgba(0,0,0,0.05)"></div>
<div class="r" style="left:1584px;top:972px;width:140px;height:39px;background:#f4f4f4;border-radius:7px"></div>
<div class="r" style="left:1744px;top:972px;width:89.5px;height:39px;background:#f4f4f4;border-radius:7px"></div>
<div class="r" style="left:1584px;top:1032px;width:249.5px;height:38.5px;background:#f4f4f4;border-radius:7px"></div>
<div class="r" style="left:1584px;top:1092px;width:60px;height:39px;background:#f4f4f4;border-radius:7px"></div>
<div class="r" style="left:1664px;top:1092px;width:169.5px;height:39px;background:#f4f4f4;border-radius:7px"></div>
<span class="t" style="left:1538.6px;top:1232px;line-height:27px;font-size:24.5px;color:#1f2329;letter-spacing:0.59px;-webkit-text-stroke:0.35px #1f2329;">Styled 404 Section 1</span>
<span class="t" style="left:1538.6px;top:1271px;line-height:27px;font-size:24.5px;color:#5a6482;letter-spacing:0.60px;-webkit-text-stroke:0.3px #5a6482;">Section</span>
<div class="r" style="left:1874.2px;top:1275.5px;width:8px;height:8px;background:#1f2329;border-radius:50%"></div>
<div class="r" style="left:1874.2px;top:1287.2px;width:8px;height:8px;background:#1f2329;border-radius:50%"></div>
<div class="r" style="left:1874.2px;top:1299px;width:8px;height:8px;background:#1f2329;border-radius:50%"></div>
</main>
<aside class="g" id="page-settings">
<span class="t" style="left:2928.7px;top:129px;line-height:26px;font-size:23px;color:#1f2329;letter-spacing:1.26px;-webkit-text-stroke:0.8px #1f2329;">Page Settings</span>
<svg class="r" style="left:3394.9px;top:127.3px;" width="21.8" height="21.8" viewBox="0 0 21.8 21.8"><path d="M1.8 1.8L20.0 20.0M20.0 1.8L1.8 20.0" stroke="#1f2329" stroke-width="3.7" fill="none"/></svg>
<span class="t" style="left:2930.5px;top:193px;line-height:26px;font-size:23px;color:#4c63cf;letter-spacing:1.87px;-webkit-text-stroke:0.8px #4c63cf;">Content</span>
<span class="t" style="left:3063.2px;top:193px;line-height:26px;font-size:23px;color:#5a6284;letter-spacing:1.58px;-webkit-text-stroke:0.8px #5a6284;">Design</span>
<span class="t" style="left:3184.3px;top:193px;line-height:26px;font-size:23px;color:#5a6284;letter-spacing:1.99px;-webkit-text-stroke:0.8px #5a6284;">Advanced</span>
<div class="r" style="left:2897px;top:246px;width:553px;height:2px;background:#dfdfe1"></div>
<div class="r" style="left:2910px;top:242px;width:133px;height:6px;background:#3f62d9"></div>
<svg class="r" style="left:2927px;top:285px;" width="18" height="12" viewBox="0 0 18 12"><path d="M1 1H16L8.5 10.6Z" fill="#3f62d9"/></svg>
<span class="t" style="left:2961.0px;top:278px;line-height:27px;font-size:24.5px;color:#3f5fd6;letter-spacing:-0.14px;-webkit-text-stroke:0.8px #3f5fd6;">Page</span>
<div class="r" style="left:2928px;top:336px;width:494px;height:56px;border:2px solid #dddfe2;border-radius:6px;box-sizing:border-box;background:#fff"></div>
<div class="r" style="left:3011px;top:345.8px;width:36px;height:36px;border-radius:6px;background:linear-gradient(135deg,#38c6f4 0%,#3b63f0 45%,#4a25ee 100%)"></div>
<span class="t" style="left:3029.0px;top:353px;line-height:23px;font-size:21px;color:#fff;font-weight:700;transform:translateX(-50%);">AI</span>
<span class="t" style="left:3057.8px;top:350px;line-height:27px;font-size:24.5px;color:#1f2329;letter-spacing:0.49px;-webkit-text-stroke:0.35px #1f2329;">Generate Content With AI</span>
<span class="t" style="left:2929.0px;top:429px;line-height:27px;font-size:24.5px;color:#5a6482;letter-spacing:0.34px;-webkit-text-stroke:0.3px #5a6482;">Page Title</span>
<div class="r" style="left:2931px;top:479px;width:493px;height:58px;border:2px solid #dddfe2;border-radius:6px;box-sizing:border-box;background:#fff"></div>
<span class="t" style="left:2953.0px;top:496px;line-height:27px;font-size:24.5px;color:#1f2329;letter-spacing:0.49px;">Theme Builder Layout</span>
<span class="t" style="left:2929.0px;top:575px;line-height:27px;font-size:24.5px;color:#5a6482;letter-spacing:0.49px;-webkit-text-stroke:0.3px #5a6482;">Excerpt</span>
<div class="r" style="left:2928px;top:624px;width:494px;height:240px;border:2px solid #dddfe2;border-radius:6px;box-sizing:border-box;background:#fff"></div>
<svg class="r" style="left:3400px;top:844px;" width="18" height="18" viewBox="0 0 18 18"><path d="M3 16L16 3M10 16L16 10" stroke="#555" stroke-width="1.6" fill="none"/></svg>
<span class="t" style="left:2929.0px;top:901px;line-height:27px;font-size:24.5px;color:#5a6482;letter-spacing:0.31px;-webkit-text-stroke:0.3px #5a6482;">Featured Image</span>
<div class="r" style="left:2928px;top:950px;width:494px;height:319px;border:2px solid #dddfe2;border-radius:6px;box-sizing:border-box;background:#fff"></div>
<svg class="r" style="left:3097px;top:1100px;" width="20" height="20" viewBox="0 0 20 20"><path d="M10 1.8V18.2M1.8 10H18.2" stroke="#a3a7bd" stroke-width="3.2" fill="none"/></svg>
<span class="t" style="left:3135.7px;top:1097px;line-height:27px;font-size:24.5px;color:#5a6482;letter-spacing:0.48px;-webkit-text-stroke:0.3px #5a6482;">Add Image</span>
<div class="r" style="left:2897px;top:1302px;width:553px;height:2px;background:#dfdfe1"></div>
<svg class="r" style="left:2927px;top:1337px;" width="14" height="20" viewBox="0 0 14 20"><path d="M1.5 1.5L12 10L1.5 18.5Z" fill="#1f2329"/></svg>
<span class="t" style="left:2960.0px;top:1334px;line-height:27px;font-size:24.5px;color:#1f2329;letter-spacing:0.92px;-webkit-text-stroke:0.8px #1f2329;">Background</span>
<div class="r" style="left:2897px;top:1392px;width:553px;height:2px;background:#dfdfe1"></div>
<div class="r" style="left:2931.8px;top:1430px;width:32px;height:32px;background:#a1a5c3;border-radius:50%"></div>
<span class="t" style="left:2947.8px;top:1433px;line-height:27px;font-size:24px;color:#fff;font-weight:700;transform:translateX(-50%);">?</span>
</aside>
<div class="g" id="callouts">
<div class="r" style="left:455.79999999999995px;top:131.3px;width:67.2px;height:67.2px;background:#e05a52;border-radius:50%;box-shadow:0 2px 6px rgba(0,0,0,0.18)"></div>
<span class="t" style="left:490.9px;top:138px;line-height:53px;font-size:48px;color:#fff;-webkit-text-stroke:2.6px #fff;transform:translateX(-50%);">1</span>
<div class="r" style="left:477.4px;top:176.1px;width:10.95px;height:7.6px;background:#e05a52"></div>
<div class="r" style="left:495.29999999999995px;top:176.1px;width:10px;height:7.6px;background:#e05a52"></div>
<div class="r" style="left:1290.1000000000001px;top:1307.9px;width:67.2px;height:67.2px;background:#e05a52;border-radius:50%;box-shadow:0 2px 6px rgba(0,0,0,0.18)"></div>
<span class="t" style="left:1323.7px;top:1316px;line-height:53px;font-size:48px;color:#fff;font-weight:700;transform:translateX(-50%);">2</span>
</div>
</body></html>
